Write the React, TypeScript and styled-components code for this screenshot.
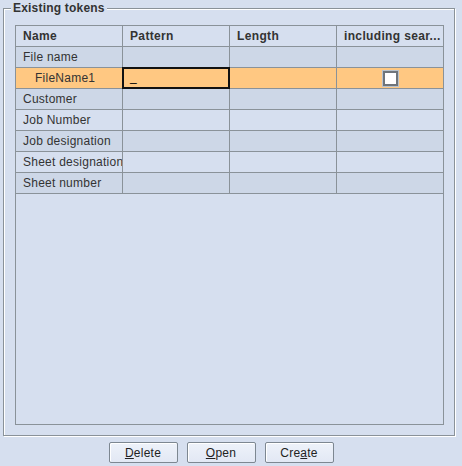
import React from 'react';
import styled, { createGlobalStyle } from 'styled-components';

const GlobalStyle = createGlobalStyle`
  html, body { margin: 0; padding: 0; background: #d6dfef; }
  body { font-family: "Liberation Sans", Arial, sans-serif; font-size: 12px; color: #333; }
`;

const Window = styled.div`
  width: 462px;
  height: 466px;
  background: #d6dfef;
  padding-top: 8px;
  box-sizing: border-box;
`;

const Group = styled.div`
  position: relative;
  margin-left: 3px;
  width: 452px;
  height: 428px;
  box-sizing: border-box;
  border: 1px solid #8a9299;
  box-shadow: 1px 1px 0 #fff, inset 1px 1px 0 #fff;
  padding: 16px 10px 10px 11px;
`;

const Title = styled.span`
  position: absolute;
  left: 7px;
  top: -9px;
  padding: 0 2px;
  background: #d6dfef;
  font-weight: bold;
  font-size: 12px;
  letter-spacing: 0.2px;
  color: #333;
  line-height: 16px;
`;

const ScrollPane = styled.div`
  height: 400px;
  border: 1px solid #8a9299;
  box-sizing: border-box;
  background: #d6dfef;
`;

const Row = styled.div<{ $bg: string }>`
  display: grid;
  grid-template-columns: 107px 107px 107px 1fr;
  height: 21px;
  background: ${p => p.$bg};
  border-bottom: 1px solid #8a9299;
  box-sizing: border-box;
`;

const Cell = styled.div<{ $bold?: boolean; $indent?: number; $last?: boolean }>`
  display: flex;
  align-items: center;
  padding-left: ${p => p.$indent ?? 7}px;
  border-right: ${p => (p.$last ? 'none' : '1px solid #8a9299')};
  font-weight: ${p => (p.$bold ? 'bold' : 'normal')};
  letter-spacing: ${p => (p.$bold ? 0.35 : 0.25)}px;
  white-space: nowrap;
  overflow: hidden;
  color: #333;
`;

const EditorCell = styled.div`
  border: 2px solid #111;
  margin: -1px 0 -1px -1px;
  display: flex;
  align-items: flex-end;
  padding: 0 0 3px 6px;
  font-size: 12px;
  color: #000;
`;

const CheckCell = styled.div`
  display: flex;
  align-items: center;
  justify-content: center;
`;

const Check = styled.span`
  width: 11px;
  height: 11px;
  background: #fff;
  border: 2px solid #6f757b;
  outline: 1px solid #b8c2cc;
`;

const ButtonBar = styled.div`
  display: flex;
  justify-content: center;
  gap: 9px;
  padding: 6px 20px 0 0;
`;

const Button = styled.button`
  width: 69px;
  height: 21px;
  border: 1px solid #7d8791;
  border-radius: 2px;
  background: linear-gradient(#eef2fa, #e2e8f4);
  box-shadow: inset 1px 1px 0 #fff;
  font-family: "Liberation Sans", Arial, sans-serif;
  font-size: 12px;
  letter-spacing: 0.25px;
  color: #222;
  padding: 0;
  u { text-decoration: underline; }
`;

const DARK = '#cdd7e7';
const LIGHT = '#d6dfef';

const names = ['File name', 'FileName1', 'Customer', 'Job Number', 'Job designation', 'Sheet designation', 'Sheet number'];

export default function App() {
  return (
    <Window>
      <GlobalStyle />
      <Group>
        <Title>Existing tokens</Title>
        <ScrollPane>
          <Row $bg={LIGHT}>
            <Cell $bold>Name</Cell>
            <Cell $bold>Pattern</Cell>
            <Cell $bold>Length</Cell>
            <Cell $bold $last>including sear...</Cell>
          </Row>
          {names.map((n, i) => {
            const selected = i === 1;
            const bg = selected ? '#ffc882' : i % 2 === 0 ? DARK : LIGHT;
            return (
              <Row key={n} $bg={bg}>
                <Cell $indent={selected ? 19 : 7}>{n}</Cell>
                {selected ? <EditorCell>_</EditorCell> : <Cell />}
                <Cell />
                {selected ? (
                  <CheckCell>
                    <Check />
                  </CheckCell>
                ) : (
                  <Cell $last />
                )}
              </Row>
            );
          })}
        </ScrollPane>
      </Group>
      <ButtonBar>
        <Button><u>D</u>elete</Button>
        <Button><u>O</u>pen</Button>
        <Button>Cre<u>a</u>te</Button>
      </ButtonBar>
    </Window>
  );
}
